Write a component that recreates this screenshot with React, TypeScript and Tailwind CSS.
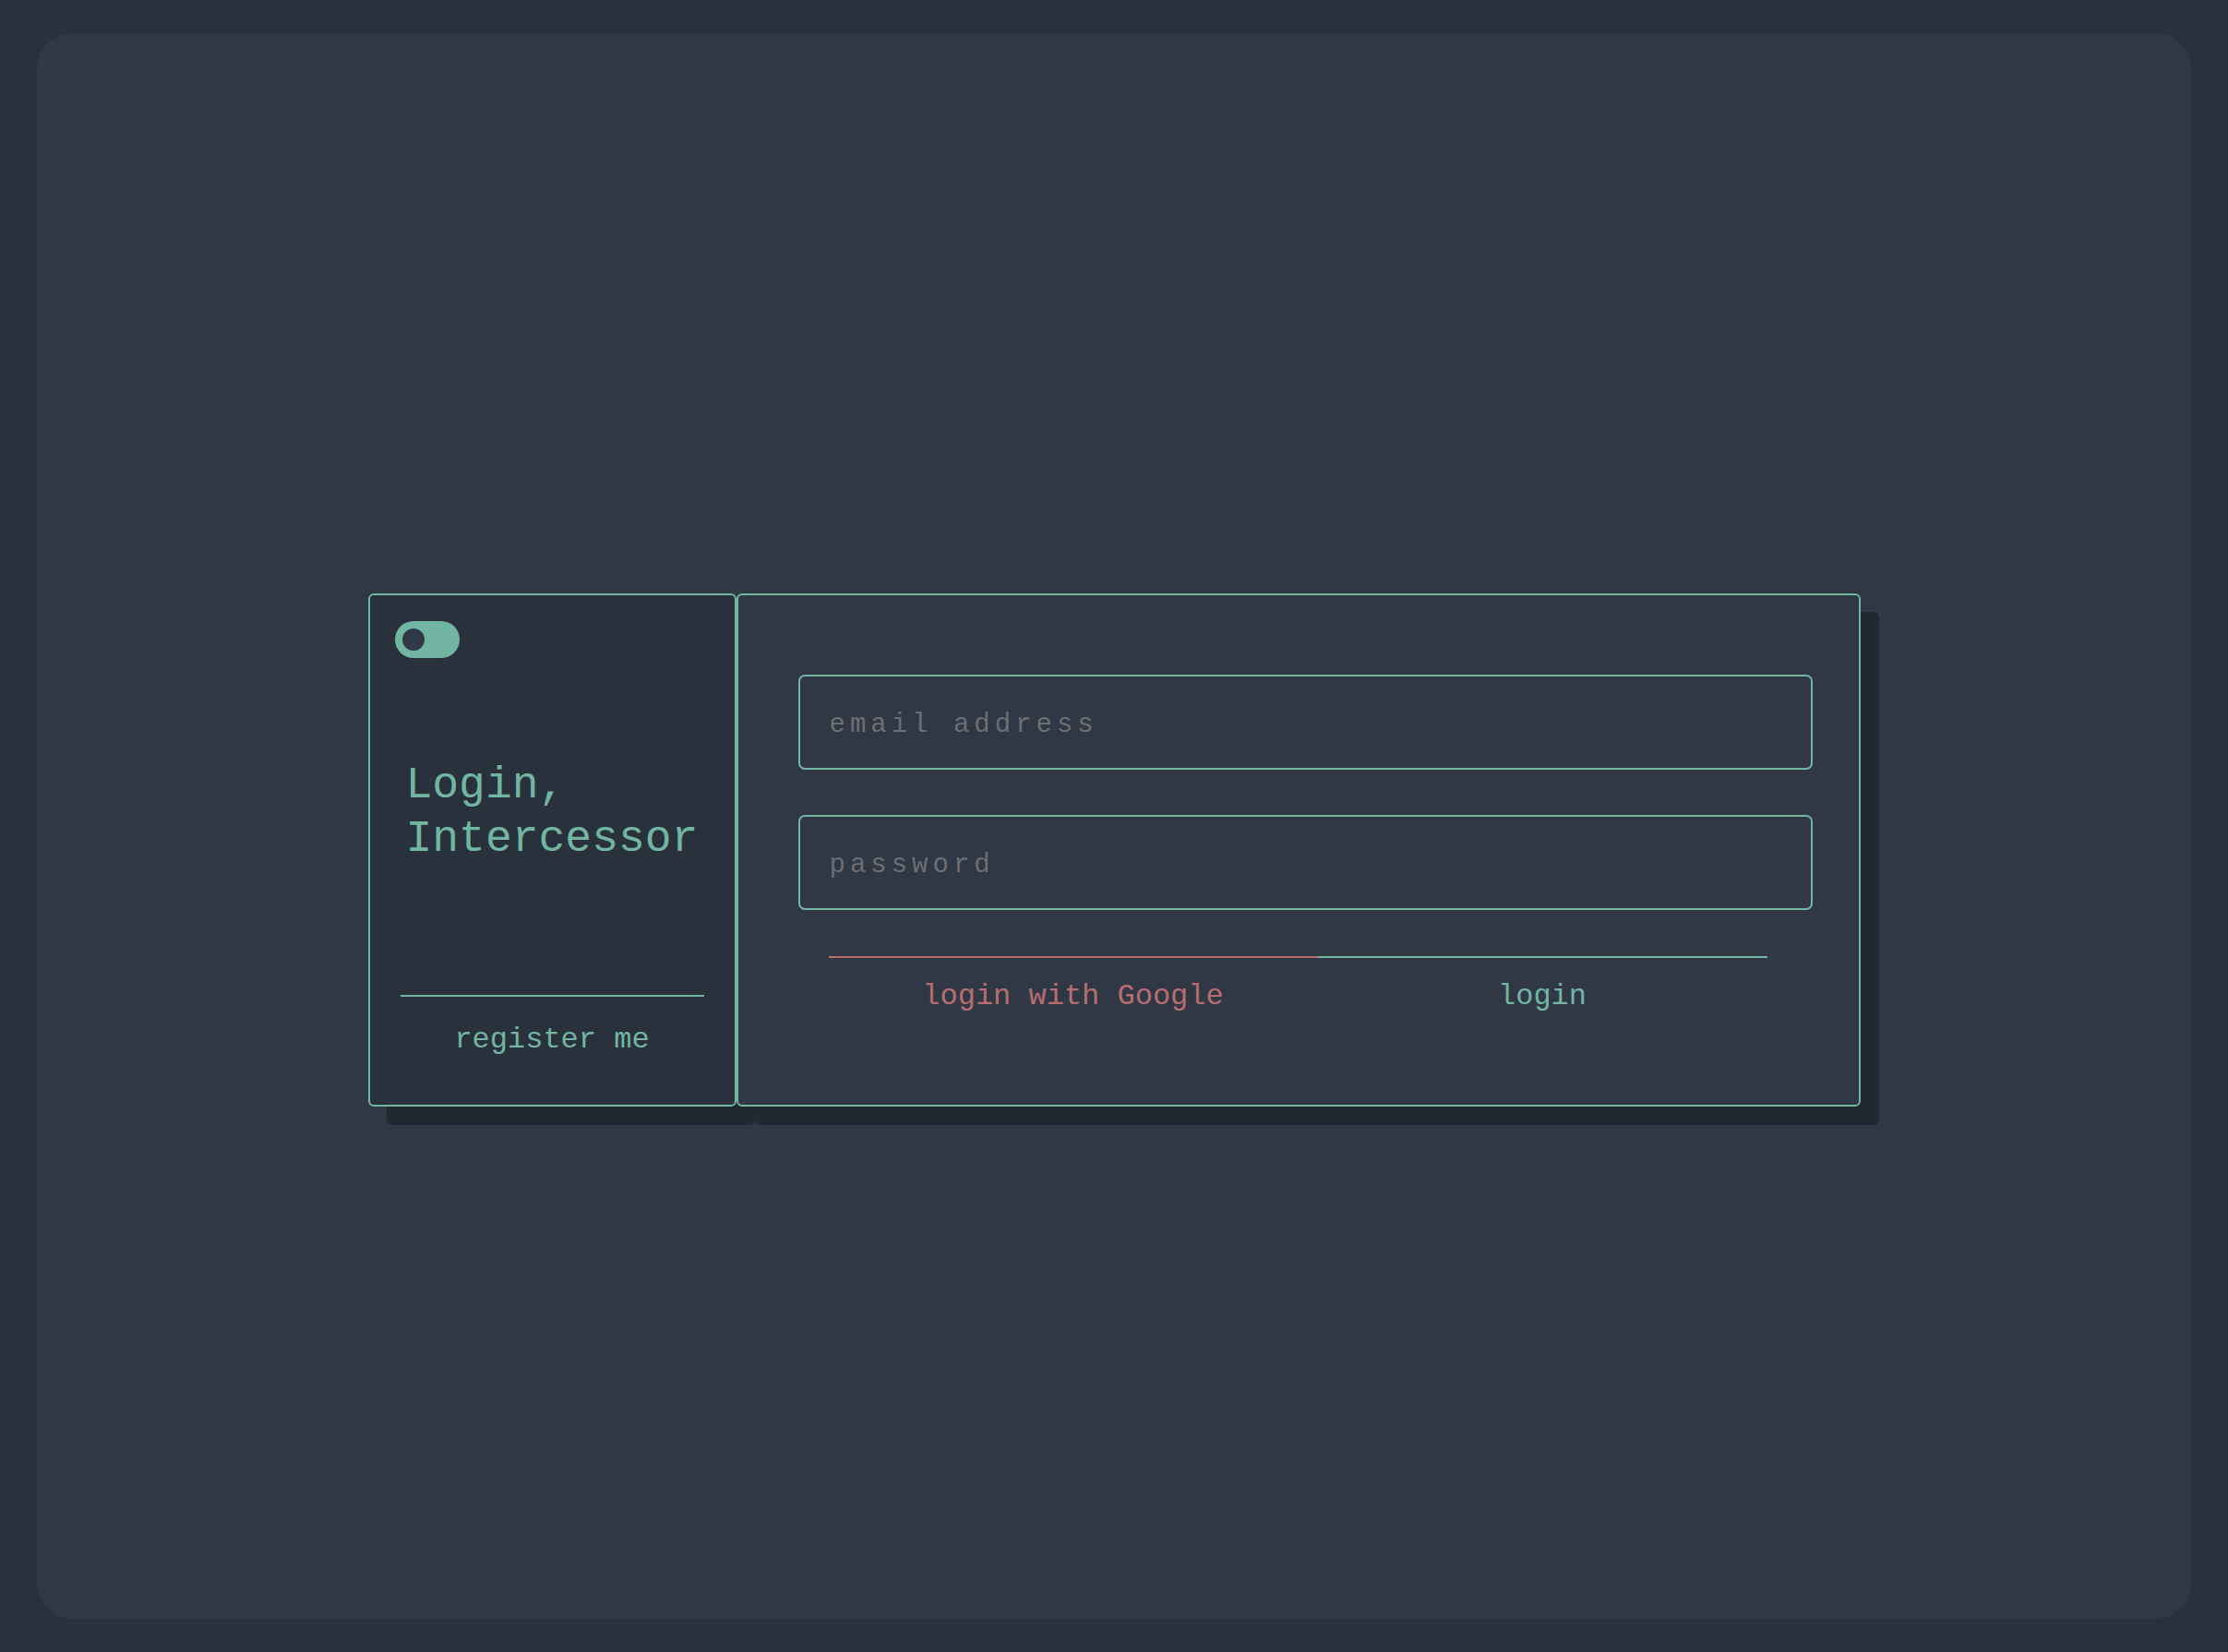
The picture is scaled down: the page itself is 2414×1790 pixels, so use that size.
const Toggle = () => {
  return (
    <div className="flex h-[40px] w-[70px] items-center rounded-full bg-[#71b5a2] pl-[8px]">
      <div className="h-[24px] w-[24px] rounded-full bg-[#303846]" />
    </div>
  );
};

const Field = ({ placeholder, type }: { placeholder: string; type: string }) => {
  return (
    <input
      type={type}
      placeholder={placeholder}
      className="h-[103px] w-full rounded-[7px] border-2 border-[#71b5a2] bg-transparent pl-[32px] pt-[6px] text-[29px] tracking-[5px] text-[#c9d1cf] outline-none placeholder:text-[#6c6e72]"
    />
  );
};

const App = () => {
  return (
    <div className="min-h-[1790px] bg-[#29323c] px-[40px] py-[36px] font-['Courier_New','Liberation_Mono',monospace]">
      <div className="flex h-[1718px] flex-col items-center justify-center rounded-[38px] bg-[#303846] pt-[52px]">
        <div className="flex">
          {/* left: title card */}
          <div className="flex h-[556px] w-[399px] flex-col rounded-[6px] border-2 border-[#71b5a2] bg-[#29323c] px-[27px] pt-[28px] shadow-[20px_20px_0_#22282f]">
            <Toggle />
            <h1 className="ml-[12px] mt-[109px] text-[48px] leading-[58px] text-[#71b5a2]">
              Login,
              <br />
              Intercessor
            </h1>
            <div className="mx-[6px] mt-auto h-[2px] bg-[#71b5a2]" />
            <button className="mb-[46px] mt-[23px] text-[32px] text-[#71b5a2]">
              register me
            </button>
          </div>

          {/* right: form card */}
          <div className="h-[556px] w-[1218px] rounded-[6px] border-2 border-[#71b5a2] bg-[#303846] pl-[65px] pr-[50px] pt-[86px] shadow-[20px_20px_0_#22282f]">
            <div className="flex flex-col gap-[49px]">
              <Field type="email" placeholder="email address" />
              <Field type="password" placeholder="password" />
            </div>
            <div className="ml-[33px] mr-[49px] mt-[50px] flex">
              <button className="w-[530px] border-t-2 border-[#b86e6e] pt-[18px] text-[32px] text-[#b86e6e]">
                login with Google
              </button>
              <button className="flex-1 border-t-2 border-[#71b5a2] pt-[18px] text-[32px] text-[#71b5a2]">
                login
              </button>
            </div>
          </div>
        </div>
      </div>
    </div>
  );
};

export default App;
